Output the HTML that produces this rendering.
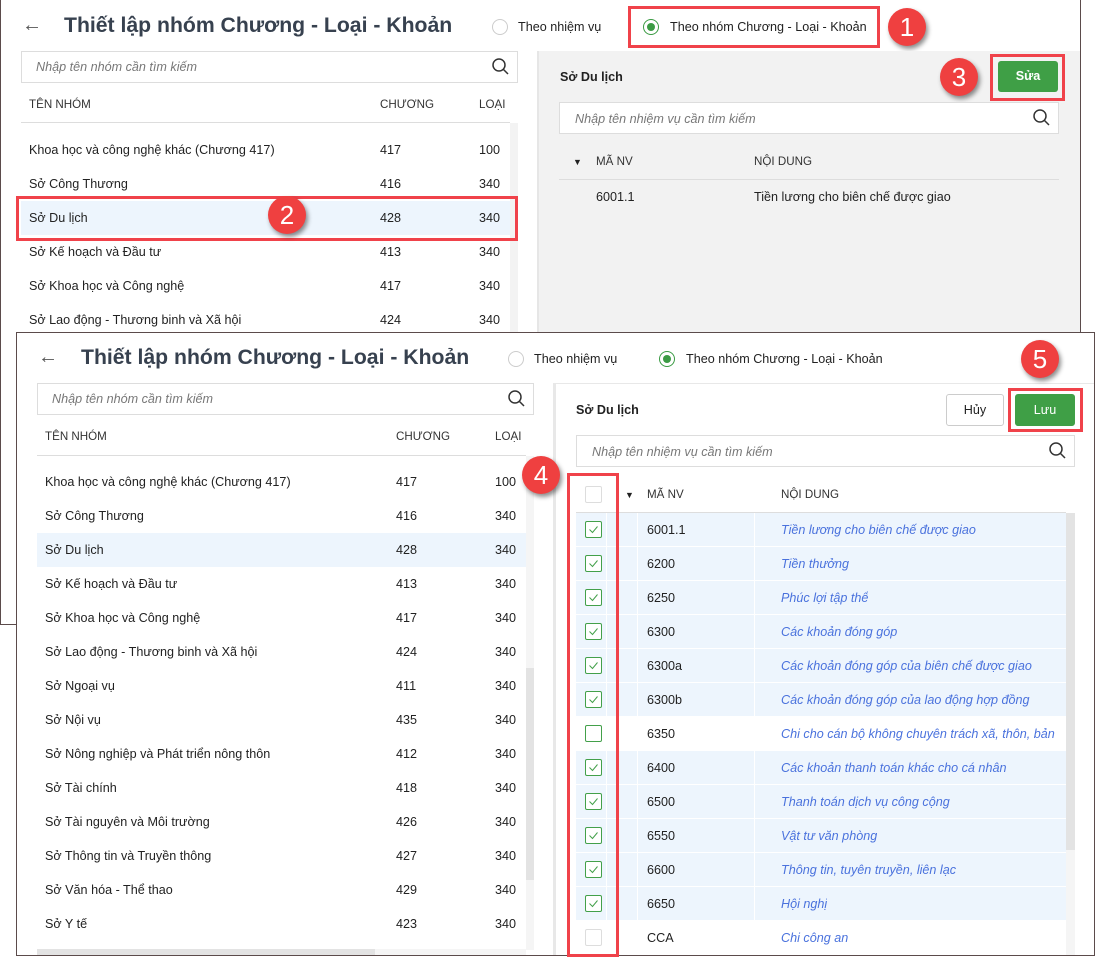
<!DOCTYPE html>
<html><head><meta charset="utf-8"><style>
*{box-sizing:border-box;margin:0;padding:0}
body{width:1096px;height:957px;background:#fff;position:relative;overflow:hidden;font-family:"Liberation Sans",Arial,sans-serif;font-size:12.6px;color:#222}
.a{position:absolute}
.t{position:absolute;white-space:nowrap;line-height:16px}
.title{font-size:21.2px;font-weight:bold;color:#37414f;line-height:26px}
.ph{font-style:italic;color:#777;font-size:12.6px}
.box{position:absolute;border:1px solid #ddd;background:#fff}
.red{position:absolute;border:3px solid #f0424a}
.badge{position:absolute;width:38px;height:38px;border-radius:50%;background:#ef4040;color:#fff;font-size:26px;text-align:center;line-height:38px;box-shadow:2px 3px 5px rgba(0,0,0,.45)}
.hd{font-size:11.6px;color:#333}
.radio{position:absolute;width:16px;height:16px;border-radius:50%;border:1px solid #ccc;background:#fff}
.radio.on{border:1px solid #3b9b44}
.radio.on:after{content:"";position:absolute;left:3px;top:3px;width:8px;height:8px;border-radius:50%;background:#3b9b44}
.cb{position:absolute;width:17px;height:17px;border:1px solid #43a04a;border-radius:2px;background:#fff}
.cb.e{border-color:#ddd}
.it{font-style:italic;color:#4a72dd}
</style></head><body>

<!-- BACK WINDOW -->
<div class="a" style="left:0;top:0;width:1081px;height:625px;border:1px solid #5b4b4b;border-top:none;background:#fff"></div>
<div class="t" style="left:22px;top:17px;font-size:20px;color:#555">←</div>
<div class="t title" style="left:64px;top:13px">Thiết lập nhóm Chương - Loại - Khoản</div>
<div class="radio" style="left:492px;top:19px"></div>
<div class="t" style="left:518px;top:19px">Theo nhiệm vụ</div>
<div class="radio on" style="left:643px;top:19px"></div>
<div class="t" style="left:670px;top:19px">Theo nhóm Chương - Loại - Khoản</div>
<div class="red" style="left:628px;top:6px;width:252px;height:42px"></div>
<div class="badge" style="left:888px;top:8px">1</div>

<div class="box" style="left:21px;top:51px;width:497px;height:32px"></div>
<div class="t ph" style="left:36px;top:59px">Nhập tên nhóm cần tìm kiếm</div>
<svg class="a" style="left:491px;top:57px" width="20" height="20"><circle cx="8" cy="8" r="6" fill="none" stroke="#333" stroke-width="1.5"/><line x1="12.5" y1="12.5" x2="17" y2="17" stroke="#333" stroke-width="1.5"/></svg>
<div class="t hd" style="left:29px;top:97px">TÊN NHÓM</div>
<div class="t hd" style="left:380px;top:97px">CHƯƠNG</div>
<div class="t hd" style="left:479px;top:97px">LOẠI</div>
<div class="a" style="left:21px;top:122px;width:489px;height:1px;background:#ddd"></div>
<div class="a" style="left:510px;top:123px;width:8px;height:210px;background:#f3f3f3"></div>
<div class="a" style="left:21px;top:201px;width:489px;height:34px;background:#edf5fd"></div>
<div class="t" style="left:29px;top:142px">Khoa học và công nghệ khác (Chương 417)</div><div class="t" style="left:380px;top:142px">417</div><div class="t" style="left:479px;top:142px">100</div>
<div class="t" style="left:29px;top:176px">Sở Công Thương</div><div class="t" style="left:380px;top:176px">416</div><div class="t" style="left:479px;top:176px">340</div>
<div class="t" style="left:29px;top:210px">Sở Du lịch</div><div class="t" style="left:380px;top:210px">428</div><div class="t" style="left:479px;top:210px">340</div>
<div class="t" style="left:29px;top:244px">Sở Kế hoạch và Đầu tư</div><div class="t" style="left:380px;top:244px">413</div><div class="t" style="left:479px;top:244px">340</div>
<div class="t" style="left:29px;top:278px">Sở Khoa học và Công nghệ</div><div class="t" style="left:380px;top:278px">417</div><div class="t" style="left:479px;top:278px">340</div>
<div class="t" style="left:29px;top:312px">Sở Lao động - Thương binh và Xã hội</div><div class="t" style="left:380px;top:312px">424</div><div class="t" style="left:479px;top:312px">340</div>
<div class="red" style="left:16px;top:196px;width:502px;height:45px"></div>
<div class="badge" style="left:268px;top:196px">2</div>

<div class="a" style="left:537px;top:51px;width:543px;height:290px;background:#f2f2f2;border-left:2px solid #e6e6e6"></div>
<div class="t" style="left:560px;top:69px;font-weight:bold">Sở Du lịch</div>
<div class="a" style="left:998px;top:61px;width:60px;height:31px;background:#3f9f46;border-radius:3px;color:#fff;font-weight:bold;text-align:center;line-height:31px">Sửa</div>
<div class="red" style="left:990px;top:54px;width:75px;height:47px"></div>
<div class="badge" style="left:940px;top:58px">3</div>
<div class="box" style="left:559px;top:102px;width:500px;height:32px"></div>
<div class="t ph" style="left:575px;top:111px">Nhập tên nhiệm vụ cần tìm kiếm</div>
<svg class="a" style="left:1032px;top:108px" width="20" height="20"><circle cx="8" cy="8" r="6" fill="none" stroke="#333" stroke-width="1.5"/><line x1="12.5" y1="12.5" x2="17" y2="17" stroke="#333" stroke-width="1.5"/></svg>
<div class="t" style="left:573px;top:154px;font-size:9px">▼</div>
<div class="t hd" style="left:596px;top:154px">MÃ NV</div>
<div class="t hd" style="left:754px;top:154px">NỘI DUNG</div>
<div class="a" style="left:559px;top:179px;width:500px;height:1px;background:#ddd"></div>
<div class="t" style="left:596px;top:189px">6001.1</div>
<div class="t" style="left:754px;top:189px">Tiền lương cho biên chế được giao</div>

<!-- FRONT WINDOW -->
<div class="a" style="left:16px;top:332px;width:1079px;height:624px;border:1px solid #5b4b4b;background:#fff"></div>
<div class="t" style="left:38px;top:349px;font-size:20px;color:#555">←</div>
<div class="t title" style="left:81px;top:345px">Thiết lập nhóm Chương - Loại - Khoản</div>
<div class="radio" style="left:508px;top:351px"></div>
<div class="t" style="left:534px;top:351px">Theo nhiệm vụ</div>
<div class="radio on" style="left:659px;top:351px"></div>
<div class="t" style="left:686px;top:351px">Theo nhóm Chương - Loại - Khoản</div>

<div class="box" style="left:37px;top:383px;width:497px;height:32px"></div>
<div class="t ph" style="left:52px;top:391px">Nhập tên nhóm cần tìm kiếm</div>
<svg class="a" style="left:507px;top:389px" width="20" height="20"><circle cx="8" cy="8" r="6" fill="none" stroke="#333" stroke-width="1.5"/><line x1="12.5" y1="12.5" x2="17" y2="17" stroke="#333" stroke-width="1.5"/></svg>
<div class="t hd" style="left:45px;top:429px">TÊN NHÓM</div>
<div class="t hd" style="left:396px;top:429px">CHƯƠNG</div>
<div class="t hd" style="left:495px;top:429px">LOẠI</div>
<div class="a" style="left:37px;top:455px;width:489px;height:1px;background:#ddd"></div>
<div class="a" style="left:526px;top:456px;width:8px;height:494px;background:#f5f5f5"></div>
<div class="a" style="left:526px;top:668px;width:8px;height:212px;background:#e3e3e3"></div>
<div class="a" style="left:37px;top:949px;width:489px;height:6px;background:#f5f5f5"></div>
<div class="a" style="left:37px;top:949px;width:338px;height:6px;background:#e3e3e3"></div>
<div class="a" style="left:37px;top:533px;width:489px;height:34px;background:#edf5fd"></div>
<div class="t" style="left:45px;top:474px">Khoa học và công nghệ khác (Chương 417)</div><div class="t" style="left:396px;top:474px">417</div><div class="t" style="left:495px;top:474px">100</div>
<div class="t" style="left:45px;top:508px">Sở Công Thương</div><div class="t" style="left:396px;top:508px">416</div><div class="t" style="left:495px;top:508px">340</div>
<div class="t" style="left:45px;top:542px">Sở Du lịch</div><div class="t" style="left:396px;top:542px">428</div><div class="t" style="left:495px;top:542px">340</div>
<div class="t" style="left:45px;top:576px">Sở Kế hoạch và Đầu tư</div><div class="t" style="left:396px;top:576px">413</div><div class="t" style="left:495px;top:576px">340</div>
<div class="t" style="left:45px;top:610px">Sở Khoa học và Công nghệ</div><div class="t" style="left:396px;top:610px">417</div><div class="t" style="left:495px;top:610px">340</div>
<div class="t" style="left:45px;top:644px">Sở Lao động - Thương binh và Xã hội</div><div class="t" style="left:396px;top:644px">424</div><div class="t" style="left:495px;top:644px">340</div>
<div class="t" style="left:45px;top:678px">Sở Ngoại vụ</div><div class="t" style="left:396px;top:678px">411</div><div class="t" style="left:495px;top:678px">340</div>
<div class="t" style="left:45px;top:712px">Sở Nội vụ</div><div class="t" style="left:396px;top:712px">435</div><div class="t" style="left:495px;top:712px">340</div>
<div class="t" style="left:45px;top:746px">Sở Nông nghiệp và Phát triển nông thôn</div><div class="t" style="left:396px;top:746px">412</div><div class="t" style="left:495px;top:746px">340</div>
<div class="t" style="left:45px;top:780px">Sở Tài chính</div><div class="t" style="left:396px;top:780px">418</div><div class="t" style="left:495px;top:780px">340</div>
<div class="t" style="left:45px;top:814px">Sở Tài nguyên và Môi trường</div><div class="t" style="left:396px;top:814px">426</div><div class="t" style="left:495px;top:814px">340</div>
<div class="t" style="left:45px;top:848px">Sở Thông tin và Truyền thông</div><div class="t" style="left:396px;top:848px">427</div><div class="t" style="left:495px;top:848px">340</div>
<div class="t" style="left:45px;top:882px">Sở Văn hóa - Thể thao</div><div class="t" style="left:396px;top:882px">429</div><div class="t" style="left:495px;top:882px">340</div>
<div class="t" style="left:45px;top:916px">Sở Y tế</div><div class="t" style="left:396px;top:916px">423</div><div class="t" style="left:495px;top:916px">340</div>

<!-- right pane front -->
<div class="a" style="left:553px;top:383px;width:541px;height:572px;border-left:3px solid #e8e8e8;border-top:1px solid #e8e8e8;background:#fff"></div>
<div class="t" style="left:576px;top:402px;font-weight:bold">Sở Du lịch</div>
<div class="a" style="left:946px;top:394px;width:58px;height:32px;border:1px solid #ccc;border-radius:3px;background:#fff;text-align:center;line-height:30px">Hủy</div>
<div class="a" style="left:1015px;top:394px;width:60px;height:32px;background:#3f9f46;border-radius:3px;color:#fff;text-align:center;line-height:32px">Lưu</div>
<div class="red" style="left:1008px;top:388px;width:75px;height:44px"></div>
<div class="badge" style="left:1021px;top:340px">5</div>
<div class="box" style="left:576px;top:435px;width:499px;height:32px"></div>
<div class="t ph" style="left:592px;top:444px">Nhập tên nhiệm vụ cần tìm kiếm</div>
<svg class="a" style="left:1048px;top:441px" width="20" height="20"><circle cx="8" cy="8" r="6" fill="none" stroke="#333" stroke-width="1.5"/><line x1="12.5" y1="12.5" x2="17" y2="17" stroke="#333" stroke-width="1.5"/></svg>

<div class="cb e" style="left:585px;top:486px"></div>
<div class="t" style="left:625px;top:487px;font-size:9px">▼</div>
<div class="t hd" style="left:647px;top:487px">MÃ NV</div>
<div class="t hd" style="left:781px;top:487px">NỘI DUNG</div>
<div class="a" style="left:576px;top:512px;width:490px;height:1px;background:#ddd"></div>
<div class="a" style="left:1066px;top:513px;width:9px;height:442px;background:#f5f5f5"></div>
<div class="a" style="left:1066px;top:513px;width:9px;height:337px;background:#e3e3e3"></div>

<div id="rows"></div>
<script>
var d=[["6001.1","Tiền lương cho biên chế được giao",1],["6200","Tiền thưởng",1],["6250","Phúc lợi tập thể",1],["6300","Các khoản đóng góp",1],["6300a","Các khoản đóng góp của biên chế được giao",1],["6300b","Các khoản đóng góp của lao động hợp đồng",1],["6350","Chi cho cán bộ không chuyên trách xã, thôn, bản",2],["6400","Các khoản thanh toán khác cho cá nhân",1],["6500","Thanh toán dịch vụ công cộng",1],["6550","Vật tư văn phòng",1],["6600","Thông tin, tuyên truyền, liên lạc",1],["6650","Hội nghị",1],["CCA","Chi công an",0]];
var h="";
d.forEach(function(r,i){var y=513+i*34;
if(r[2]==1){h+='<div class="a" style="left:576px;top:'+y+'px;width:490px;height:33px;background:#edf5fd"></div>';
[606,637,754].forEach(function(x){h+='<div class="a" style="left:'+x+'px;top:'+y+'px;width:1px;height:33px;background:#fff"></div>'});}
h+='<div class="a" style="left:576px;top:'+(y+33)+'px;width:490px;height:1px;background:#fff"></div>';
h+='<div class="cb'+(r[2]==0?' e':'')+'" style="left:585px;top:'+(y+8)+'px"></div>';
if(r[2]==1)h+='<svg class="a" style="left:585px;top:'+(y+8)+'px" width="17" height="17"><path d="M4.5 8.5 L7.5 11.5 L12.5 5.5" fill="none" stroke="#43a04a" stroke-width="1"/></svg>';
h+='<div class="t" style="left:647px;top:'+(y+9)+'px">'+r[0]+'</div><div class="t it" style="left:781px;top:'+(y+9)+'px;max-width:284px;overflow:hidden">'+r[1]+'</div>';});
document.getElementById("rows").outerHTML=h;
</script>
<div class="red" style="left:567px;top:473px;width:52px;height:484px"></div>
<div class="badge" style="left:522px;top:456px">4</div>
</body></html>
